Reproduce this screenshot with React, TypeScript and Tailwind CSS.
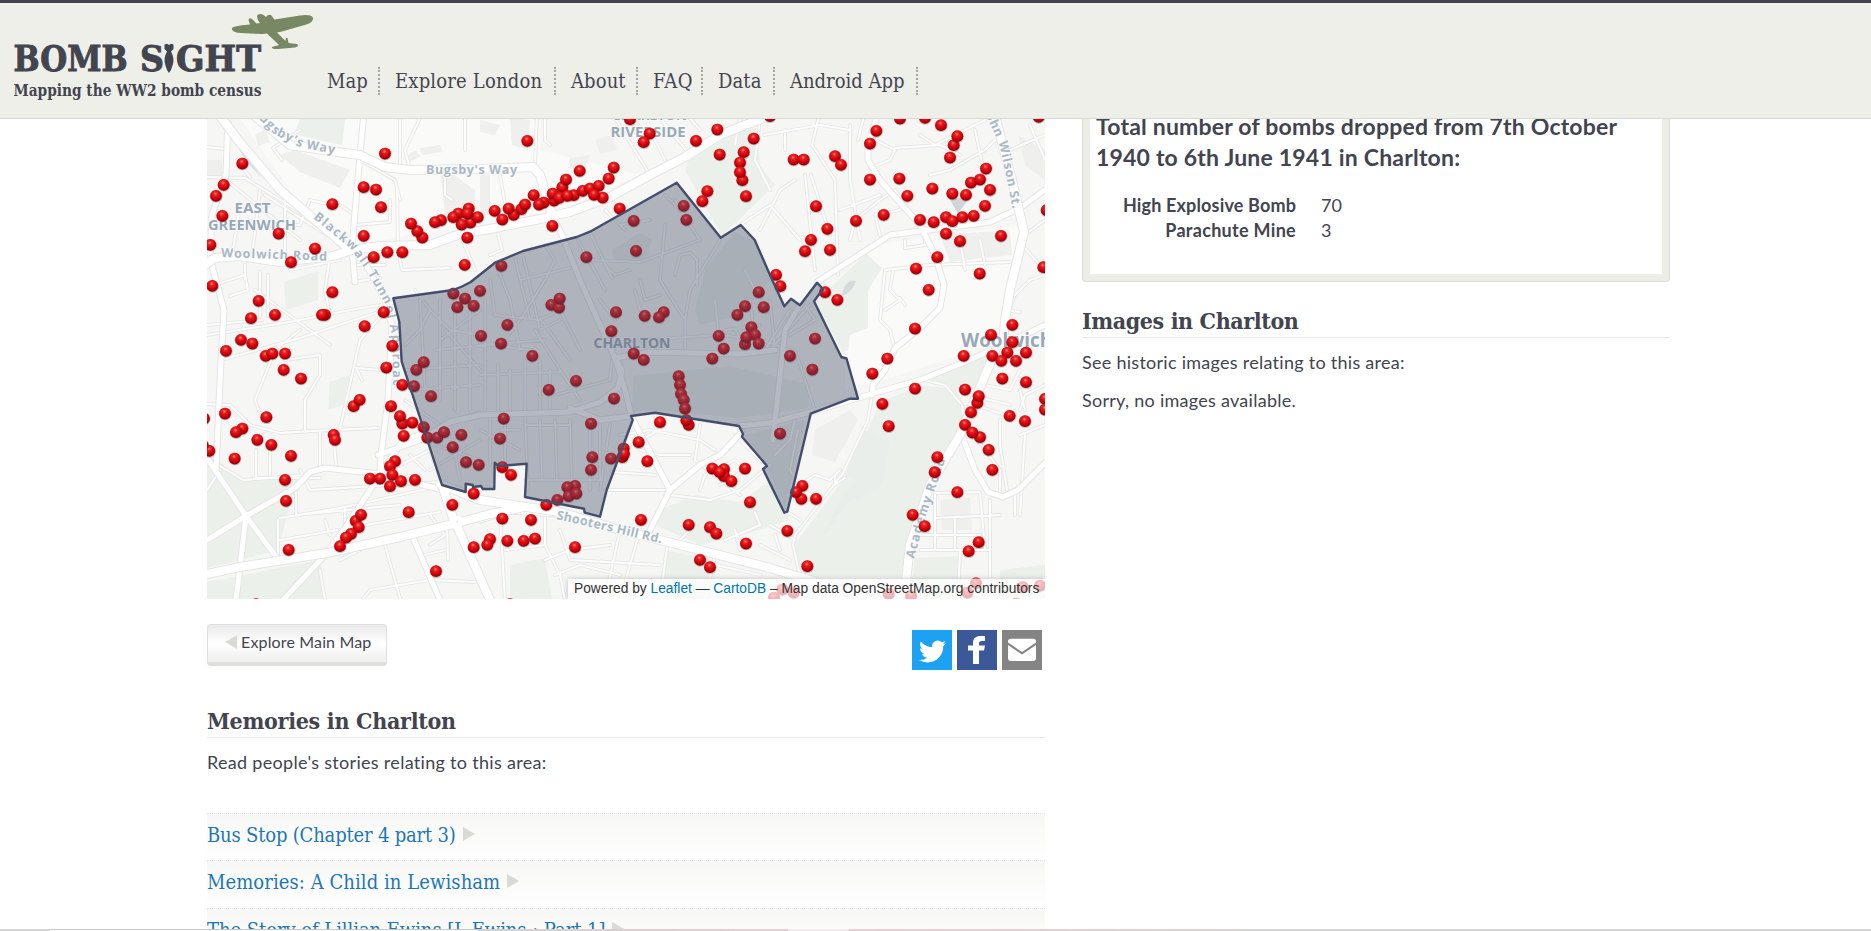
import React from "react";

type Tile = { x: number; y: number; marks: string };

/* Marker positions per tile, in thirds of a pixel from the tile's corner. */
const tiles: Tile[] = [
  {
    x: 200,
    y: 115,
    marks:
      "555,115 127,145 71,209 48,242 67,302 397,267 491,216 528,223 543,276 236,355 345,400 273,441 31,389 37,512 491,362 667,367 652,348 633,325 723,315 705,321 775,295 806,280 811,322 833,306 785,328 760,306 802,295 802,367 794,449 521,426 562,411 607,411 397,531 176,557 153,609 225,599 375,599 366,599 551,591 494,633 577,692 123,674 157,685 78,707 197,722 217,715 255,715 760,535 795,550 840,527 772,576 821,572 843,662",
  },
  {
    x: 480,
    y: 115,
    marks:
      "450,12 509,55 491,81 142,77 648,77 712,43 821,70 719,118 791,111 780,142 787,195 780,171 798,243 682,228 667,258 401,157 386,190 299,167 247,216 258,193 161,240 44,287 67,313 101,299 86,280 124,282 135,268 191,262 177,268 222,256 218,235 238,248 281,240 262,242 308,227 330,220 356,212 368,247 342,239 419,280 217,332 611,272 619,314 461,317 468,407 319,426 64,452 214,569 237,577 239,550 82,629 63,685 157,722 408,591 394,648 494,602 551,591 537,606 461,715 491,734 836,531 795,573 772,599 851,576 716,662 731,700 697,730 814,636 825,659 795,687 799,666 836,685",
  },
  {
    x: 760,
    y: 115,
    marks:
      "30,3 420,10 495,8 836,5 349,47 330,85 543,30 581,90 592,63 570,127 101,133 131,133 225,123 243,149 330,193 418,190 442,242 517,220 577,235 618,239 633,202 660,193 678,160 690,224 675,272 168,273 202,341 153,374 135,408 210,404 288,317 371,299 480,314 521,321 558,306 577,318 607,306 641,302 558,355 600,378 723,362 532,426 468,460 506,524 659,475 61,513 48,479 195,531 232,554 465,640 382,730 611,722 693,659 757,629 757,681 742,712 697,722 798,712 724,737 768,737 860,285 850,456 165,670 90,722",
  },
  {
    x: 200,
    y: 355,
    marks:
      "251,44 303,70 559,37 607,89 642,93 649,44 671,21 693,123 461,153 479,134 573,153 607,205 600,183 637,202 671,216 682,247 712,247 732,231 611,242 758,276 784,239 798,321 836,329 75,175 199,186 127,220 108,231 172,254 214,269 401,239 405,254 104,310 273,302 28,287 12,190 8,270 255,374 258,437 510,370 540,370 585,318 570,333 577,359 603,378 570,393 645,374 626,471 757,449 821,415 266,584 467,497 483,479 476,516 453,536 438,547 420,573 821,576 870,552 862,569 708,648 168,747",
  },
  {
    x: 480,
    y: 355,
    marks:
      "206,104 288,77 402,130 71,190 60,250 333,205 337,306 333,344 393,310 596,63 600,89 603,116 611,134 615,160 626,209 619,195 540,201 476,261 431,280 427,306 432,296 502,318 67,336 93,359 285,392 262,396 266,423 289,415 232,434 199,449 67,490 153,494 82,557 131,557 165,550 285,576 483,494 626,509 690,516 709,535 798,565 660,614 690,636 697,340 732,342 732,363 719,351 754,378 795,340 810,441 90,747",
  },
  {
    x: 760,
    y: 355,
    marks:
      "337,55 465,100 367,146 386,213 615,103 652,143 656,123 633,171 615,209 660,246 637,232 686,284 697,344 532,306 524,351 592,411 458,479 494,513 656,561 626,588 727,70 798,81 749,182 795,198 855,131 855,163 127,392 124,431 108,411 168,431 82,527 142,633 157,43 60,235 67,703 101,712 42,727 386,716 453,722 648,684 622,712 788,696 840,691 768,745",
  },
];

const markers = tiles.flatMap((t) =>
  t.marks.split(" ").map((m) => {
    const [px, py] = m.split(",").map(Number);
    return { x: t.x + px / 3, y: t.y + py / 3 };
  })
);

const area =
  "393.3,298.3 453,290 462,286.500 470.7,282 495,262.7 523,251 576.7,237 590,231.7 676.7,182.7 720.7,237.7 740.7,225 754.7,240 770,275 784.3,306.3 791,298.7 800,305.3 817,282.7 823,289 814,301.3 841.3,357 846.5,358.5 858,398.7 850,398.7 810.7,413.7 787.3,511.7 784.3,512.7 763,469 767,466 742,436.7 743,434 739,426 655,412.7 631,416 632.7,420 606.7,490 600,516.7 584.7,512.7 584,508.7 525,497 526.7,463.7 498.3,466 494.7,462.7 494.3,489 482.7,489 481,486 473,487 472.7,485 465.7,483.7 465.7,492 442,485 401.7,361.7 399.3,321.7";

const mainRoads = [
  "M217 112L238 140L280 190L350 250",
  "M207 264L214 258L240 256L280 262L333 256L352 250L380 246L430 245L460 234L490 229L540 219L570 212L610 197L650 175L685 157L720 135L745 125L770 116",
  "M250 112L290 145L330 151L360 155L385 167L410 170L480 169L533 167L540 175L552 215",
  "M207 574L240 567L327 553L400 537L453 524L490 514L520 508",
  "M440 484L480 500L560 512L620 530L680 545L770 568L810 580L870 599",
  "M442 485L452 515L470 555L490 600",
  "M995 352L960 435L930 485L910 545L904 600",
  "M994 112L1012 180L1024 232L1010 290L1005 320L1003 345",
];

const midRoads = [
  "M350 250L365 262L385 300L392 325L388 400L381 455L380 474",
  "M228 118L226 175L212 215L210 258L224 310L221 360L216 470",
  "M364 112L360 155L356 200L352 250L355 282",
  "M480 520L510 511L557 514",
  "M552 215L562 235L580 280L600 325L615 358",
  "M207 458L246 516L277 558",
  "M207 540L246 516L295 488L310 472L325 468L380 474L443 490",
  "M246 516L240 567L236 600",
  "M283 600L325 555L345 528L378 478L402 442L425 432",
  "M378 455L420 440L450 422L480 415L570 412L600 402L618 388L622 370L615 358",
  "M570 408L600 420L631 416",
  "M615 358L625 390L632 418L670 490",
  "M648 534L670 490L700 465L720 455L742 432",
  "M739 426L770 423L811 412L858 398L875 393L920 380L960 364L1010 342L1045 325",
  "M876 112L876 120L868 145L868 160L880 180L920 225L935 255L944 285L940 308L920 328L895 348L885 370L873 385L872 395",
  "M817 282L890 235L990 222L1020 208L1045 190",
  "M960 430L975 470L988 492L1003 497L1018 490L1045 463",
  "M414 540L440 600",
  "M773 440L785 330L800 305",
  "M615 358L650 352L740 354L775 350",
];

const minorRoads = [
  "M207 177L245 178L300 212L350 250M207 147L226 149M250 177L240 165M226 180L300 240M240 205L232 256M260 190L252 256M270 225L300 225L310 200L332 205M285 200L285 262M330 256L325 290L330 315",
  "M207 335L290 322L350 310L392 303M207 325L262 320M221 360L300 338L360 318L392 308M260 272L260 316M268 275L268 316M245 280L245 265M290 270L340 260M214 285L245 275L248 290L230 296M255 290L330 345",
  "M282 160L273 148L300 130M350 250L265 195M400 118L400 165M410 170L405 150L420 118M445 175L445 195L452 200M465 118L465 150M500 175L507 215M537 112L535 165M545 118L545 140L550 145M397 190L398 243",
  "M360 160L395 180L400 200M355 215L340 205M356 225L390 222L390 200M354 265L385 265M352 282L380 278M398 250L402 270L450 268M460 234L475 270M497 230L502 250L490 255",
  "M615 118L650 175M645 112L650 130L665 160M690 118L700 130M660 118L690 155M740 118L735 145M770 190L755 160L760 120L775 112M740 225L770 205L800 240M820 112L812 145L835 180L838 275M811 175L830 235M850 125L850 180L860 240M858 140L865 112M764 135L820 125L850 130M785 130L785 150M795 180L780 190L760 230M805 175L815 270M875 140L895 150L890 160L870 168M895 148L940 145M920 135L935 145L985 120M940 145L960 155M1000 135L985 150L950 170L930 175M1030 125L1045 160M1010 150L1045 135M975 130L990 200M1025 235L1045 220M880 235L875 215L900 210L905 200M840 210L880 195M895 190L920 225M850 240L855 220L880 200L895 190",
  "M905 240L905 248L925 245L925 233M885 270L880 320L890 330L895 350M885 270L930 265L1010 262M893 270L890 290L900 300L885 310M900 298L905 305M1003 325L1015 295L1030 280L1045 275M1005 310L1020 312M1022 245L1040 265M960 240L965 270M980 240L985 265",
  "M207 404L230 405L250 425L280 433L330 430L378 428M210 460L243 480L306 475M320 433L320 470M333 430L336 465M305 430L305 400L320 375L320 355L285 360M262 420L255 400L275 350L300 330M340 428L360 340L395 300M256 450L256 478L320 478M270 450L270 475M207 490L220 470M296 490L296 515L400 505M278 520L278 560M280 518L340 508L445 485M300 470L310 490L440 482M325 520L330 535M345 508L345 530M280 540L440 512",
  "M381 370L356 368L362 380M381 475L430 450L440 480M410 455L425 470M385 545L400 598M320 570L325 600M340 560L360 550M430 515L445 535L430 545M447 525L448 560M362 600L370 590L430 580L475 582M424 555L445 550",
  "M500 515L505 600M545 515L545 545L560 575L565 600M505 550L545 545M545 560L570 550L610 545M555 575L580 565L620 575M620 530L605 600M667 548L660 600M640 530L620 600M560 530L570 560L660 565M715 555L705 600M725 540L760 525L755 512M735 530L740 550M690 530L680 540M718 555L716 565L760 575",
  "M620 435L650 430L700 440L715 450M605 490L665 490M612 472L655 475M640 450L660 455L690 455M700 425L695 460L740 495M670 495L710 500L740 490L770 465M700 490L705 475L735 460L745 470L720 485M735 435L765 465M655 415L660 430L640 440",
  "M872 395L868 420L843 473L795 535L793 545L800 576M775 455L790 440L795 420M798 430L790 470L800 485L815 475L830 480L840 470M835 475L835 485L845 478M800 520L785 510M770 525L795 540M760 545L790 560M775 535L780 550",
  "M923 380L945 385L962 405L965 432M970 395L1010 405M975 405L1005 415M985 385L1010 390L1020 370M1020 390L1025 410M1000 420L1000 445L1007 490M1025 435L1020 515M1020 435L1045 425M1045 385L1025 395L1020 410M970 430L1000 470L1000 492M935 493L980 492L985 550M935 518L1000 515M920 550L990 550M935 493L935 550M955 520L955 550M990 500L990 600M1015 495L1015 515M960 550L958 600M918 535L980 535",
];

const districtRoads = [
  "M490 280L495 315L540 320L560 310M495 262L510 300L520 350M515 258L530 320M520 280L570 268M523 255L540 330L560 320M545 245L555 260L545 280L520 320L500 345M480 345L545 340M535 330L560 370L580 400M540 318L570 360M560 310L580 350M578 240L605 290M590 232L612 278M590 260L640 262L700 240M605 265L615 275L630 270M665 225L660 280L685 320L685 350M685 320L690 290L720 240M675 275L680 255L690 253L697 260L697 285M620 225L650 220M605 210L625 230M600 300L615 320M640 280L645 300L660 295M635 290L640 310L665 320M700 240L690 225L675 200M665 195L690 220",
  "M415 290L430 310L420 330L405 345M430 310L450 330L480 335M435 350L490 345L530 350M440 340L480 310M445 330L480 370M405 370L480 365M410 390L480 385M420 300L425 390M440 300L440 400M455 300L455 410M470 300L470 410M485 300L485 410M405 400L440 425L480 412M420 440L480 460M430 470L480 440M450 425L460 480M498 365L498 410M510 370L510 410M525 360L525 410M540 360L540 410M550 370L550 410M480 375L560 372M555 395L610 380L612 360",
  "M525 415L528 490M540 420L542 480M555 420L557 480M570 420L572 490M590 425L590 490M600 425L600 480M525 425L570 425M525 480L600 480M610 425L600 490M500 430L520 430M490 415L490 465M505 415L505 460M480 430L520 450",
  "M640 340L720 335L760 340L790 350M720 340L725 330L760 325M735 330L745 345M750 300L755 340M770 300L775 350M790 310L765 350M810 305L770 350M790 335L815 320L805 305M795 350L815 410M745 270L760 300M720 345L715 300",
];

const parks = [
  "207,452 225,466 246,480 300,478 290,505 278,550 240,560 207,568",
  "207,582 320,560 325,600 207,600",
  "303,112 346,112 342,145 318,140 294,134",
  "284,282 318,271 318,300 286,310",
  "330,382 350,375 343,405 328,410",
  "685,170 692,150 725,130 756,128 760,165 775,185 722,236",
  "815,302 866,254 882,268 868,290 868,328 850,335 848,350 843,352",
  "870,425 880,402 920,386 955,388 966,408 960,430 930,475 912,545 908,577 800,577 794,545 845,478",
  "660,510 695,495 740,502 768,482 790,520 760,530 700,545 655,525",
  "665,550 715,560 710,600 665,600",
  "510,565 545,558 552,600 510,600",
  "925,380 990,352 975,388 962,392",
  "915,558 962,556 960,600 910,600",
  "1000,570 1045,565 1045,600 1000,600",
];

const deepParks = [
  "612,250 640,233 652,240 645,262 615,262",
  "695,310 705,270 735,232 755,242 770,280 740,315 700,325",
  "633,376 730,366 810,385 808,408 740,418 655,410 632,412",
  "862,430 890,440 882,485 845,505 822,538 840,500 858,480 845,476",
  "745,435 805,420 785,508 768,470",
];

const buildings = [
  "280,155 295,150 350,170 340,188 300,172",
  "255,135 265,130 270,142 258,146",
  "440,165 475,190 475,215 445,215",
  "405,158 415,150 420,156 410,162",
  "420,148 440,145 443,152 422,155",
  "480,175 490,175 490,215 480,215",
  "480,120 500,125 495,135 480,132",
  "510,118 530,120 528,150 512,145",
  "570,158 590,155 585,168 568,168",
  "595,140 612,135 617,150 600,154",
  "815,430 850,410 858,420 835,462 812,455",
  "940,235 1010,230 1012,255 950,262",
  "1018,135 1045,150 1045,180 1025,165",
  "940,500 970,498 972,530 942,530",
  "207,160 222,160 222,178 207,180",
];

function Roads({ paths, casing, fill, outer, inner }: { paths: string[]; casing: string; fill: string; outer: number; inner: number }) {
  return (
    <g fill="none" strokeLinejoin="round" strokeLinecap="round">
      {paths.map((d) => (
        <path key={"c" + d} d={d} stroke={casing} strokeWidth={outer} />
      ))}
      {paths.map((d) => (
        <path key={"f" + d} d={d} stroke={fill} strokeWidth={inner} />
      ))}
    </g>
  );
}

function CensusMap() {
  return (
    <svg className="block h-[480px] w-[838px]" viewBox="207 119 838 480">
      <defs>
        <radialGradient id="mark" cx="0.45" cy="0.32" r="0.68">
          <stop offset="0" stopColor="#ff7f78" />
          <stop offset="0.25" stopColor="#e8201f" />
          <stop offset="0.65" stopColor="#cf0008" />
          <stop offset="1" stopColor="#85000a" />
        </radialGradient>
        <path id="bugsby-west" d="M252 112L274 134L300 147L340 155" />
        <path id="blackwall" d="M313 218L350 248L366 270L384 302L392 335L393 385" />
        <path id="wilson" d="M983 110L999 143L1007 180L1014 215" />
        <path id="academy" d="M914 559L926 515L947 455" />
      </defs>
      <rect x="207" y="118" width="838" height="482" fill="#f6f6f4" />
      <g fill="#fafaf8">
        <polygon points="240,118 540,118 540,150 640,175 560,210 352,245 300,205" />
        <polygon points="870,245 1020,225 1003,340 900,375 845,390 845,350" />
      </g>
      {parks.map((p) => (
        <polygon key={p} points={p} fill="#ebf0eb" />
      ))}
      {deepParks.map((p) => (
        <polygon key={p} points={p} fill="#e9eeea" />
      ))}
      {buildings.map((p) => (
        <polygon key={p} points={p} fill="#efefed" />
      ))}
      <path d="M234 140L248 158L262 178L245 160Z" fill="#d9dfe2" />
      <path d="M843 290Q848 278 856 281Q853 292 842 296Z" fill="#d5dadd" />
      <Roads paths={minorRoads} casing="#e6e6e5" fill="#fdfdfd" outer={3.8} inner={2} />
      <Roads paths={districtRoads} casing="#e3e4e5" fill="#fafafa" outer={3.6} inner={1.8} />
      <Roads paths={midRoads} casing="#e5e5e4" fill="#ffffff" outer={7} inner={5} />
      <Roads paths={mainRoads} casing="#e5e5e4" fill="#ffffff" outer={10} inner={8} />
      <circle cx="457" cy="522" r="4" fill="#f3f3f1" stroke="#fff" strokeWidth="5" />
      <path d="M949 198L969 198L958 214Z" fill="#cfd5d9" />

      <g
        className="font-['Open_Sans',sans-serif] font-bold"
        fill="#a9b8c5"
        stroke="#fafaf9"
        strokeWidth="2"
        paintOrder="stroke"
        fontSize="12.500"
      >
        <g fill="#97a9b8" fontSize="13.500">
          <text x="234.500" y="212.500" textLength="36" lengthAdjust="spacingAndGlyphs">EAST</text>
          <text x="208" y="229.500" textLength="88" lengthAdjust="spacingAndGlyphs">GREENWICH</text>
          <text x="612" y="120" textLength="75" lengthAdjust="spacingAndGlyphs">CHARLTON</text>
          <text x="610.500" y="136.500" textLength="75" lengthAdjust="spacingAndGlyphs">RIVERSIDE</text>
          <text x="593.500" y="347.500" textLength="77" lengthAdjust="spacingAndGlyphs">CHARLTON</text>
          <text x="961" y="346.500" fontSize="19" textLength="91" lengthAdjust="spacingAndGlyphs">Woolwich</text>
        </g>
        <text x="221" y="257" textLength="106" transform="rotate(2 221 257)">Woolwich Road</text>
        <text x="426" y="173.500" textLength="91">Bugsby's Way</text>
        <text x="556" y="519" textLength="108" transform="rotate(13 556 519)">Shooters Hill Rd.</text>
        <text>
          <textPath href="#bugsby-west" textLength="95">Bugsby's Way</textPath>
        </text>
        <text>
          <textPath href="#blackwall" textLength="206">Blackwall Tunnel Approach</textPath>
        </text>
        <text>
          <textPath href="#wilson" textLength="104">John Wilson St.</textPath>
        </text>
        <text>
          <textPath href="#academy" textLength="104">Academy Road</textPath>
        </text>
      </g>

      {markers.map((m, i) => (
        <g key={i}>
          <circle cx={m.x + 0.2} cy={m.y + 0.6} r="6.4" fill="#3a0a0a" opacity="0.25" />
          <circle cx={m.x} cy={m.y + 0.2} r="5.9" fill="url(#mark)" />
        </g>
      ))}
      <polygon points={area} fill="#465069" fillOpacity="0.4" stroke="#434e6d" strokeWidth="2.400" strokeLinejoin="round" />
    </svg>
  );
}

function Logo() {
  return (
    <svg className="h-[90px] w-[302px]" viewBox="12 11 302 90">
      <g className="font-['DejaVu_Serif_Condensed','DejaVu_Serif',serif] font-bold" fill="#42444f" stroke="#42444f">
        <g fontSize="35.500" strokeWidth="0.9">
          <text x="13.500" y="71.300" textLength="114" lengthAdjust="spacingAndGlyphs">BOMB</text>
          <text x="140" y="71.300" textLength="24" lengthAdjust="spacingAndGlyphs">S</text>
          <text x="176" y="71.300" textLength="85" lengthAdjust="spacingAndGlyphs">GHT</text>
        </g>
        <text x="13.500" y="95.600" fontSize="16.500" strokeWidth="0" textLength="248" lengthAdjust="spacingAndGlyphs">Mapping the WW2 bomb census</text>
      </g>
      <path d="M164.500 44.500L167 43.800L169 45L171 43.800L173.500 44.500V49L171 51.500Q174.500 58 173 64L171 70L169 73L167 70L165 64Q163.500 58 167 51.500L164.500 49Z" fill="#42444f" />
      <path
        d="M232 28C234 26 243 25 250 24.500L248.500 20Q249 17 252 19L256.500 23.500L260 23Q256 18 257.500 15Q260 13 263.500 15L266 17Q268 14 271 15L274.500 19.500L300 15.500Q312 14 313 18Q313.500 21.500 308 24L282 31.500L277 32.500L285.500 41Q285 37.500 287.500 38L288.500 43L297 44Q300 46 295 47.500L278 49Q271 49 272 47L279 45L267 33.500L262 34L240 33Q231 32 232 28Z"
        fill="#788863"
      />
    </svg>
  );
}

const nav = [
  { label: "Map", box: "w-[53px]", track: "tracking-[0.1px]" },
  { label: "Explore London", box: "w-[161px]", track: "tracking-[0.18px]" },
  { label: "About", box: "w-[67px]", track: "tracking-[0.1px]" },
  { label: "FAQ", box: "w-[50px]", track: "tracking-[0.5px]" },
  { label: "Data", box: "w-[57px]", track: "tracking-[0.1px]" },
  { label: "Android App", box: "w-[128px]", track: "tracking-[0px]" },
];

const stories = [
  { title: "Bus Stop (Chapter 4 part 3)", track: "tracking-[-0.18px]" },
  { title: "Memories: A Child in Lewisham", track: "tracking-[0.07px]" },
  { title: "The Story of Lillian Ewins [L Ewins : Part 1]", track: "tracking-[-0.06px]" },
];

export default function App() {
  return (
    <div className="flex h-[931px] w-[1871px] flex-col overflow-hidden bg-white font-['Lato',sans-serif] text-[#42444f]">
      <header className="flex h-[119px] shrink-0 items-start border-t-[3px] border-b border-t-[#42434f] border-b-[#d9dad4] bg-[#efefe9] pt-2 pl-3">
        <Logo />
        <nav className="mt-14 ml-[13px] flex gap-[15px] font-['DejaVu_Serif_Condensed','DejaVu_Serif',serif] text-[20px] leading-7 whitespace-nowrap">
          {nav.map((n) => (
            <a key={n.label} className={`${n.box} ${n.track} h-7 border-r-2 border-dotted border-[#a3a4a4]`}>
              {n.label}
            </a>
          ))}
        </nav>
      </header>

      <div className="flex min-h-0 flex-1 gap-[37px] overflow-hidden pl-[207px]">
        <main className="w-[838px] shrink-0">
          <div className="grid h-[480px] items-end overflow-hidden [&>*]:col-start-1 [&>*]:row-start-1">
            <CensusMap />
            <p className="z-10 h-5 w-[477px] justify-self-end bg-white/70 px-[6px] font-['Liberation_Sans',sans-serif] text-[13.780px] leading-5 whitespace-nowrap text-[#333] shadow-[0_0_5px_#bbb]">
              Powered by <a className="text-[#0078a8]">Leaflet</a> — <a className="text-[#0078a8]">CartoDB</a> – Map data OpenStreetMap.org contributors
            </p>
          </div>

          <div className="flex items-start justify-between pt-[25px] pr-[3px]">
            <a className="flex h-[42px] w-[180px] items-center rounded border border-b-4 border-[#dedfdc] bg-linear-to-b from-[#eaeaea] via-white to-[#efefef] pb-1 pl-[17px] text-[16px] tracking-[0.15px] whitespace-nowrap">
              <svg className="mr-1 h-[14px] w-3" viewBox="0 0 12 14">
                <path d="M12 0V14L0 7Z" fill="#d9dad4" />
              </svg>
              Explore Main Map
            </a>
            <div className="mt-[6px] flex gap-[5px]">
              <span className="flex size-10 items-center justify-center bg-[#1da1f2]">
                <svg className="mt-[3px] size-[27px]" viewBox="0 0 24 24" fill="#fff">
                  <path d="M23.953 4.570a10 10 0 01-2.825.775 4.958 4.958 0 002.163-2.723c-.951.555-2.005.959-3.127 1.184a4.920 4.920 0 00-8.384 4.482C7.690 8.095 4.067 6.130 1.640 3.162a4.822 4.822 0 00-.666 2.475c0 1.710.870 3.213 2.188 4.096a4.904 4.904 0 01-2.228-.616v.060a4.923 4.923 0 003.946 4.827 4.996 4.996 0 01-2.212.085 4.936 4.936 0 004.604 3.417 9.867 9.867 0 01-6.102 2.105c-.390 0-.779-.023-1.170-.067a13.995 13.995 0 007.557 2.209c9.053 0 13.998-7.496 13.998-13.985 0-.210 0-.420-.015-.630A9.935 9.935 0 0024 4.590z" />
                </svg>
              </span>
              <span className="flex size-10 items-center justify-center bg-[#3b5998]">
                <svg className="size-10" viewBox="0 0 40 40" fill="#fff">
                  <path d="M16 34V20.500H11V15.500H16V13C16 8 19 6 23.500 6H28V11H25C22.500 11 22 12 22 14V15.500H28L27 20.500H22V34Z" />
                </svg>
              </span>
              <span className="flex size-10 items-center justify-center bg-[#848484]">
                <svg className="size-10" viewBox="0 0 40 40" fill="#fff">
                  <path d="M9 8.700H31Q34 8.700 34 11.500V12.500L20 22L6 12.500V11.500Q6 8.700 9 8.700Z" />
                  <path d="M6 15L20 24.500L34 15V28Q34 31 31 31H9Q6 31 6 28Z" />
                </svg>
              </span>
            </div>
          </div>

          <h2 className="mt-[35px] h-[33px] border-b border-[#e8e8e6] font-['DejaVu_Serif_Condensed','DejaVu_Serif',serif] text-[23px] leading-8 font-bold tracking-[-0.3px] whitespace-nowrap">
            Memories in Charlton
          </h2>
          <p className="mt-3 text-[18px] leading-6 tracking-[0.3px]">Read people's stories relating to this area:</p>
          <ul className="mt-[39px]">
            {stories.map((s) => (
              <li
                key={s.title}
                className="flex h-[47.300px] items-start border-t border-dotted border-[#e4e4e2] bg-linear-to-b from-[#f7f7f5] to-white pt-[7px] font-['DejaVu_Serif_Condensed','DejaVu_Serif',serif] text-[20px] leading-7 whitespace-nowrap text-[#1c77b5]"
              >
                <a className={s.track}>{s.title}</a>
                <svg className="mt-[6px] ml-[7px] h-[14px] w-3" viewBox="0 0 12 14">
                  <path d="M0 0V14L12 7Z" fill="#d9dad4" />
                </svg>
              </li>
            ))}
          </ul>
        </main>

        <aside className="w-[588px] shrink-0">
          <section className="flex h-[163px] flex-col rounded-b-[4px] border border-t-0 border-[#dcddd7] bg-[#ecede7] px-[7px]">
            <div className="flex h-[155px] flex-col bg-white pl-[6px] whitespace-nowrap">
              <h3 className="-mt-[8px] text-[23px] leading-[31px] font-bold tracking-[0.2px]">
                Total number of bombs dropped from 7th October
                <br />
                1940 to 6th June 1941 in Charlton:
              </h3>
              <dl className="mt-5 grid grid-cols-[200px_auto] gap-x-[25px] text-[18px] leading-[25px]">
                <dt className="text-right font-bold tracking-[0.15px]">High Explosive Bomb</dt>
                <dd>70</dd>
                <dt className="text-right font-bold tracking-[0.3px]">Parachute Mine</dt>
                <dd>3</dd>
              </dl>
            </div>
          </section>
          <h2 className="mt-[22px] h-[34px] border-b border-[#e8e8e6] font-['DejaVu_Serif_Condensed','DejaVu_Serif',serif] text-[23px] leading-[34px] font-bold tracking-[-0.4px] whitespace-nowrap">
            Images in Charlton
          </h2>
          <p className="mt-3 text-[18px] leading-6 tracking-[0.27px]">See historic images relating to this area:</p>
          <p className="mt-[14px] text-[18px] leading-6 tracking-[0.27px]">Sorry, no images available.</p>
        </aside>
      </div>
      <div className="flex h-[2px] shrink-0">
        <div className="w-[50px] bg-[#d4d4d4]" />
        <div className="w-[428px] border-t border-[#c9c9c9] bg-white" />
        <div className="w-[310px] bg-linear-to-r from-[#d3d0d0] to-[#e3cfd4]" />
        <div className="w-[61px] bg-[#f3e9ec]" />
        <div className="w-[392px] bg-linear-to-r from-[#e6d0d5] to-[#d8d4d4]" />
        <div className="flex-1 bg-[#d4d4d4]" />
      </div>
    </div>
  );
}
